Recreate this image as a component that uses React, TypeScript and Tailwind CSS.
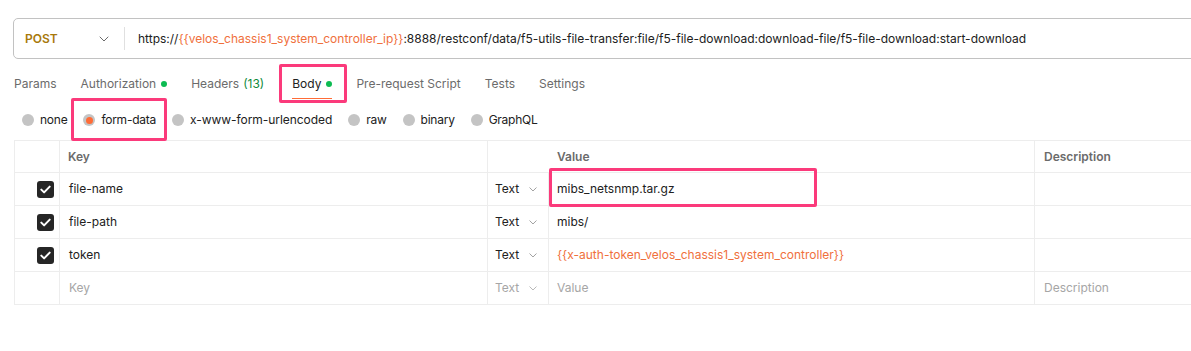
import React from 'react';

const font = { fontFamily: 'Inter, "Noto Sans", sans-serif' };

function Chevron({ className = '', w = 10 }: { className?: string; w?: number }) {
  return (
    <svg width={w} height={w * 0.6} viewBox="0 0 10 6" className={className} fill="none">
      <path d="M1 1l4 4 4-4" stroke="currentColor" strokeWidth="1" strokeLinecap="round" strokeLinejoin="round" />
    </svg>
  );
}

function Check() {
  return (
    <span className="w-[17px] h-[17px] rounded-[3px] bg-[#262626] flex items-center justify-center">
      <svg width="11" height="9" viewBox="0 0 11 9" fill="none">
        <path d="M1.3 4.6l2.8 2.8L9.7 1.6" stroke="#fff" strokeWidth="2" strokeLinecap="round" strokeLinejoin="round" />
      </svg>
    </span>
  );
}

const Var = ({ children }: { children: React.ReactNode }) => <span className="text-[#f0703c]">{children}</span>;

const tabs = [
  { label: 'Params' },
  { label: 'Authorization', dot: true },
  { label: 'Headers', count: '(13)' },
  { label: 'Body', dot: true, active: true },
  { label: 'Pre-request Script' },
  { label: 'Tests' },
  { label: 'Settings' },
];

const bodyTypes = [
  { label: 'none', cls: 'tracking-[-0.25px]' },
  { label: 'form-data', cls: 'tracking-[-0.25px]' },
  { label: 'x-www-form-urlencoded', cls: 'tracking-[-0.05px]' },
  { label: 'raw', cls: 'tracking-[-0.25px]' },
  { label: 'binary', cls: 'tracking-[-0.25px]' },
  { label: 'GraphQL', cls: 'tracking-[-0.25px]' },
];

const rows = [
  { key: 'file-name', value: 'mibs_netsnmp.tar.gz', mark: true },
  { key: 'file-path', value: 'mibs/' },
  { key: 'token', value: <Var>{'{{x-auth-token_velos_chassis1_system_controller}}'}</Var> },
];

const cell = 'border-r border-b border-[#ededed] flex items-center';

export default function App() {
  return (
    <div className="min-h-screen bg-white overflow-hidden text-[12px] text-[#212121] pl-[13px] pt-[18px]" style={font}>
      {/* url bar */}
      <div className="flex items-center h-[41px] border border-[#c2c2c2] rounded-[5px] -mr-4">
        <div className="flex items-center w-[110px] pl-[11px] pr-[15px] justify-between">
          <span className="font-semibold text-[#a8790b]">POST</span>
          <Chevron className="text-[#6b6b6b]" />
        </div>
        <div className="w-px h-[23px] bg-[#e0e0e0]" />
        <div className="pl-[13px] whitespace-nowrap">
          https://<Var>{'{{velos_chassis1_system_controller_ip}}'}</Var>:8888/restconf/data/f5-utils-file-transfer:file/f5-file-download:download-file/f5-file-download:start-download
        </div>
      </div>

      {/* tabs */}
      <div className="flex gap-6 mt-[10px] h-[31px] pl-px">
        {tabs.map(t => (
          <div key={t.label} className={`relative pt-[5px] ${t.active ? 'ml-[4px]' : ''}`}>
            <div className={`flex items-center gap-[5px] leading-5 pb-[4px] ${t.active ? 'text-[#212121] border-b-[1.5px] border-[#ff6c37]' : 'text-[#6b6b6b]'}`}>
              <span>{t.label}</span>
              {t.count && <span className="text-[#0f8a3c] -ml-[1px]">{t.count}</span>}
              {t.dot && <span className="w-[6px] h-[6px] rounded-full bg-[#0cbb52]" />}
            </div>
            {t.active && <span className="absolute -left-[13px] -top-[5px] w-[68px] h-[39px] border-[3px] border-[#fb3a7b] rounded-[2px]" />}
          </div>
        ))}
      </div>

      {/* body types */}
      <div className="flex items-center gap-[16px] mt-[10px] h-5 pl-[9px]">
        {bodyTypes.map(b => (
          <div key={b.label} className="relative flex items-center gap-[6px]">
            <span className="w-[12px] h-[12px] rounded-full bg-[#c4c4c4] flex items-center justify-center">
              {b.label === 'form-data' && <span className="w-[7px] h-[7px] rounded-full bg-[#ff6c37]" />}
            </span>
            <span className={`text-[#212121] ${b.cls}`}>{b.label}</span>
            {b.label === 'form-data' && <span className="absolute -left-[12px] -top-[13px] w-[96px] h-[43px] border-[3px] border-[#fb3a7b] rounded-[2px]" />}
          </div>
        ))}
      </div>

      {/* table */}
      <div className="mt-[10px] ml-px grid grid-cols-[45px_428px_61px_486px_1fr] border-l border-t border-[#ededed] -mr-4">
        <div className={`${cell} h-[32px]`} />
        <div className={`${cell} pl-[8px] font-semibold text-[#6b6b6b]`}>Key</div>
        <div className="border-b border-[#ededed]" />
        <div className={`${cell} pl-[8px] font-semibold text-[#6b6b6b]`}>Value</div>
        <div className={`${cell} pl-[9px] font-semibold text-[#6b6b6b] border-r-0`}>Description</div>

        {rows.map(r => (
          <React.Fragment key={r.key}>
            <div className={`${cell} h-[33px] justify-end pr-[5px]`}><Check /></div>
            <div className={`${cell} pl-[9px]`}>{r.key}</div>
            <div className={`${cell} pl-[7px] gap-[10px]`}>
              <span>Text</span>
              <Chevron w={8} className="text-[#8a8a8a]" />
            </div>
            <div className={`${cell} pl-[8px] relative`}>
              {r.value}
              {r.mark && <span className="absolute left-0 -top-[5px] w-[268px] h-[39px] border-[3px] border-[#fb3a7b] rounded-[2px]" />}
            </div>
            <div className={`${cell} border-r-0`} />
          </React.Fragment>
        ))}

        <div className={`${cell} h-[33px]`} />
        <div className={`${cell} pl-[9px] text-[#a6a6a6]`}>Key</div>
        <div className={`${cell} pl-[7px] gap-[10px] text-[#a6a6a6]`}>
          <span>Text</span>
          <Chevron w={8} className="text-[#a6a6a6]" />
        </div>
        <div className={`${cell} pl-[8px] text-[#a6a6a6]`}>Value</div>
        <div className={`${cell} pl-[9px] text-[#a6a6a6] border-r-0`}>Description</div>
      </div>
    </div>
  );
}
